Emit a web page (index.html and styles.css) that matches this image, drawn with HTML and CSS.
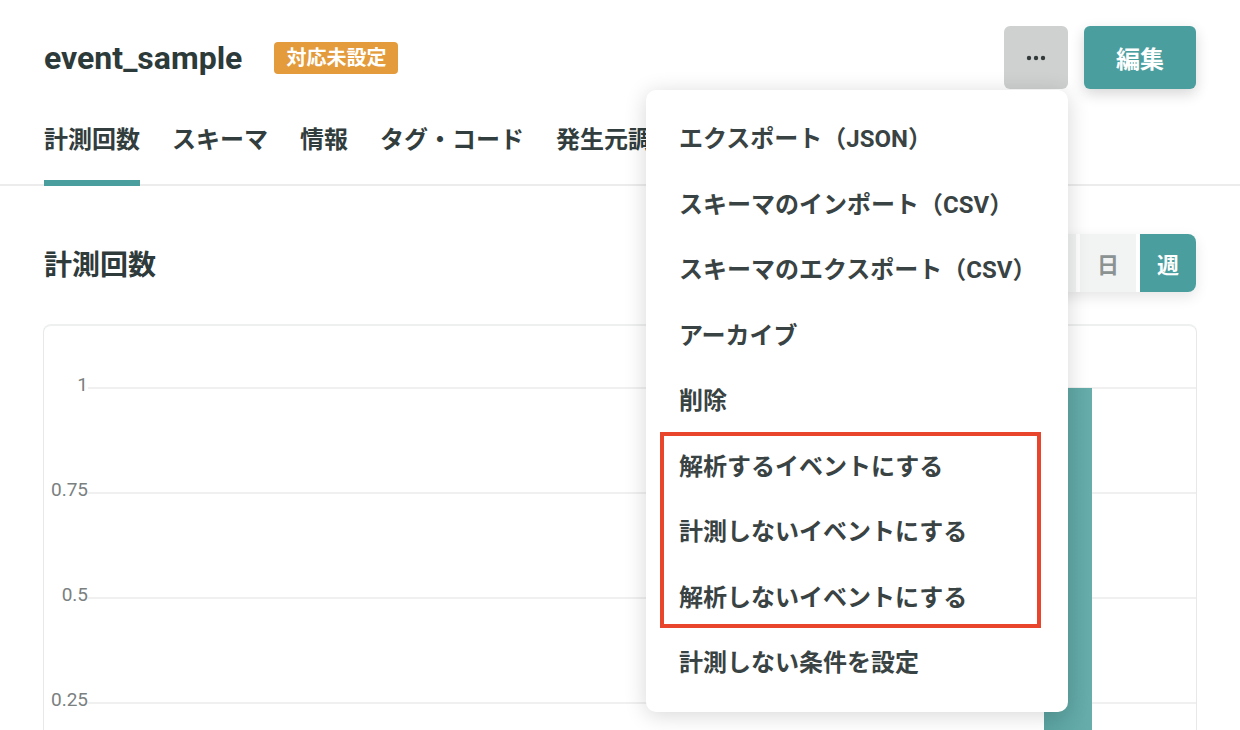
FILE: index.html
```html
<!DOCTYPE html>
<html lang="ja">
<head>
<meta charset="utf-8">
<title>event_sample</title>
<link rel="stylesheet" href="styles.css">
</head>
<body>
<div class="page">
  <header class="top">
    <div class="title-wrap">
      <h1 class="title">event_sample</h1>
      <span class="badge">対応未設定</span>
    </div>
    <div class="actions">
      <div class="more-wrap">
        <button class="more" aria-label="more">
          <svg width="20" height="6" viewBox="0 0 20 6"><circle cx="3" cy="3" r="2.2" fill="#333a3a"/><circle cx="10" cy="3" r="2.2" fill="#333a3a"/><circle cx="17" cy="3" r="2.2" fill="#333a3a"/></svg>
        </button>
        <div class="menu">
          <div class="menu-item">エクスポート（JSON）</div>
          <div class="menu-item">スキーマのインポート（CSV）</div>
          <div class="menu-item">スキーマのエクスポート（CSV）</div>
          <div class="menu-item">アーカイブ</div>
          <div class="menu-item">削除</div>
          <div class="menu-group">
            <div class="menu-item">解析するイベントにする</div>
            <div class="menu-item">計測しないイベントにする</div>
            <div class="menu-item">解析しないイベントにする</div>
          </div>
          <div class="menu-item">計測しない条件を設定</div>
        </div>
      </div>
      <button class="edit">編集</button>
    </div>
  </header>

  <nav class="tabs">
    <a class="tab active">計測回数</a>
    <a class="tab">スキーマ</a>
    <a class="tab">情報</a>
    <a class="tab">タグ・コード</a>
    <a class="tab">発生元調査</a>
  </nav>

  <section class="content">
    <div class="section-head">
      <h2 class="section-title">計測回数</h2>
      <div class="seg">
        <span class="seg-item">時</span>
        <span class="seg-item">日</span>
        <span class="seg-item active">週</span>
      </div>
    </div>

    <div class="card">
      <div class="plot">
        <div class="tick"><span class="tick-label">1</span><span class="tick-line"></span></div>
        <div class="tick"><span class="tick-label">0.75</span><span class="tick-line"></span></div>
        <div class="tick"><span class="tick-label">0.5</span><span class="tick-line"></span></div>
        <div class="tick"><span class="tick-label">0.25</span><span class="tick-line"></span></div>
        <div class="bar" style="left:1000px;height:420px"></div>
      </div>
    </div>
  </section>
</div>
</body>
</html>
```

FILE: styles.css
```css
html, body {
  margin: 0;
  padding: 0;
  overflow: hidden;
  background: #ffffff;
}
body {
  font-family: "Roboto", "Noto Sans CJK JP", sans-serif;
  color: #2f3b3b;
  width: 1240px;
  height: 730px;
}
.page {
  width: 1240px;
}
button {
  font-family: inherit;
  border: none;
  cursor: pointer;
}

/* header */
.top {
  display: flex;
  justify-content: space-between;
  align-items: center;
  padding: 26px 44px 0 44px;
  height: 63px;
}
.title-wrap {
  display: flex;
  align-items: center;
  gap: 32px;
}
.title {
  margin: 0;
  font-size: 32px;
  font-weight: 700;
  color: #2d3a3a;
  letter-spacing: 0;
}
.badge {
  background: #e39b3b;
  color: #fff;
  font-size: 20px;
  font-weight: 700;
  height: 32px;
  line-height: 32px;
  padding: 0 12px;
  border-radius: 4px;
}
.actions {
  display: flex;
  align-items: center;
  gap: 16px;
}
.more-wrap {
  position: relative;
}
.more {
  width: 64px;
  height: 63px;
  border-radius: 6px;
  background: #cfd1d0;
  display: flex;
  align-items: center;
  justify-content: center;
  padding: 0;
}
.edit {
  width: 112px;
  height: 63px;
  border-radius: 6px;
  background: #4a9e9e;
  color: #fff;
  font-size: 24px;
  font-weight: 700;
  box-shadow: 0 5px 14px rgba(0, 0, 0, 0.16);
}

/* dropdown menu */
.menu {
  position: absolute;
  top: 64px;
  right: 0;
  width: 422px;
  background: #fff;
  border-radius: 10px;
  box-shadow: 0 3px 22px rgba(0, 0, 0, 0.16);
  padding: 14px 0 18px 0;
  z-index: 10;
}
.menu-item {
  height: 65.5px;
  display: flex;
  align-items: center;
  padding-left: 33px;
  font-size: 24px;
  font-weight: 700;
  color: #394343;
  white-space: nowrap;
}
.menu-group {
  margin: 0 27px 0 14px;
  outline: 4px solid #e8452c;
  outline-offset: -4px;
}
.menu-group .menu-item {
  padding-left: 19px;
}

/* tabs */
.tabs {
  display: flex;
  gap: 32px;
  padding: 0 44px;
  border-bottom: 2px solid #ececec;
}
.tab {
  font-size: 24px;
  font-weight: 700;
  line-height: 34px;
  padding: 34px 0 23px 0;
  border-bottom: 6px solid transparent;
  margin-bottom: -2px;
  color: #323d3d;
  white-space: nowrap;
}
.tab.active {
  border-bottom-color: #4a9e9e;
}

/* content */
.content {
  padding: 0 43px 0 43px;
}
.section-head {
  display: flex;
  justify-content: space-between;
  align-items: center;
  margin-top: 48px;
  height: 58px;
}
.section-title {
  margin: 0 0 0 1px;
  font-size: 28px;
  font-weight: 700;
  color: #2f3b3b;
}
.seg {
  display: flex;
  gap: 4px;
  box-shadow: 0 5px 14px rgba(0, 0, 0, 0.1);
  border-radius: 8px;
  margin-right: 1px;
}
.seg-item {
  width: 56px;
  height: 58px;
  display: flex;
  align-items: center;
  justify-content: center;
  background: #f2f4f4;
  color: #8b9292;
  font-size: 22px;
  font-weight: 700;
}
.seg-item:first-child {
  border-radius: 8px 0 0 8px;
}
.seg-item:last-child {
  border-radius: 0 8px 8px 0;
}
.seg-item.active {
  background: #4a9e9e;
  color: #fff;
}

.card {
  margin-top: 32px;
  border: 1px solid #e7e9e9;
  border-top: 2px solid #eeefef;
  border-radius: 8px;
  padding: 50px 0 0 0;
  height: 400px;
}
.plot {
  position: relative;
}
.tick {
  display: flex;
  align-items: center;
  height: 24px;
  margin-bottom: 81px;
}
.tick-label {
  width: 44px;
  text-align: right;
  font-size: 19px;
  color: #7a8080;
  line-height: 24px;
  position: relative;
  top: -3px;
}
.tick-line {
  flex: 1;
  height: 2px;
  background: #f0f0f0;
}
.bar {
  position: absolute;
  top: 12px;
  width: 48px;
  background: linear-gradient(90deg, #5aa2a0, #66adab);
}
```
